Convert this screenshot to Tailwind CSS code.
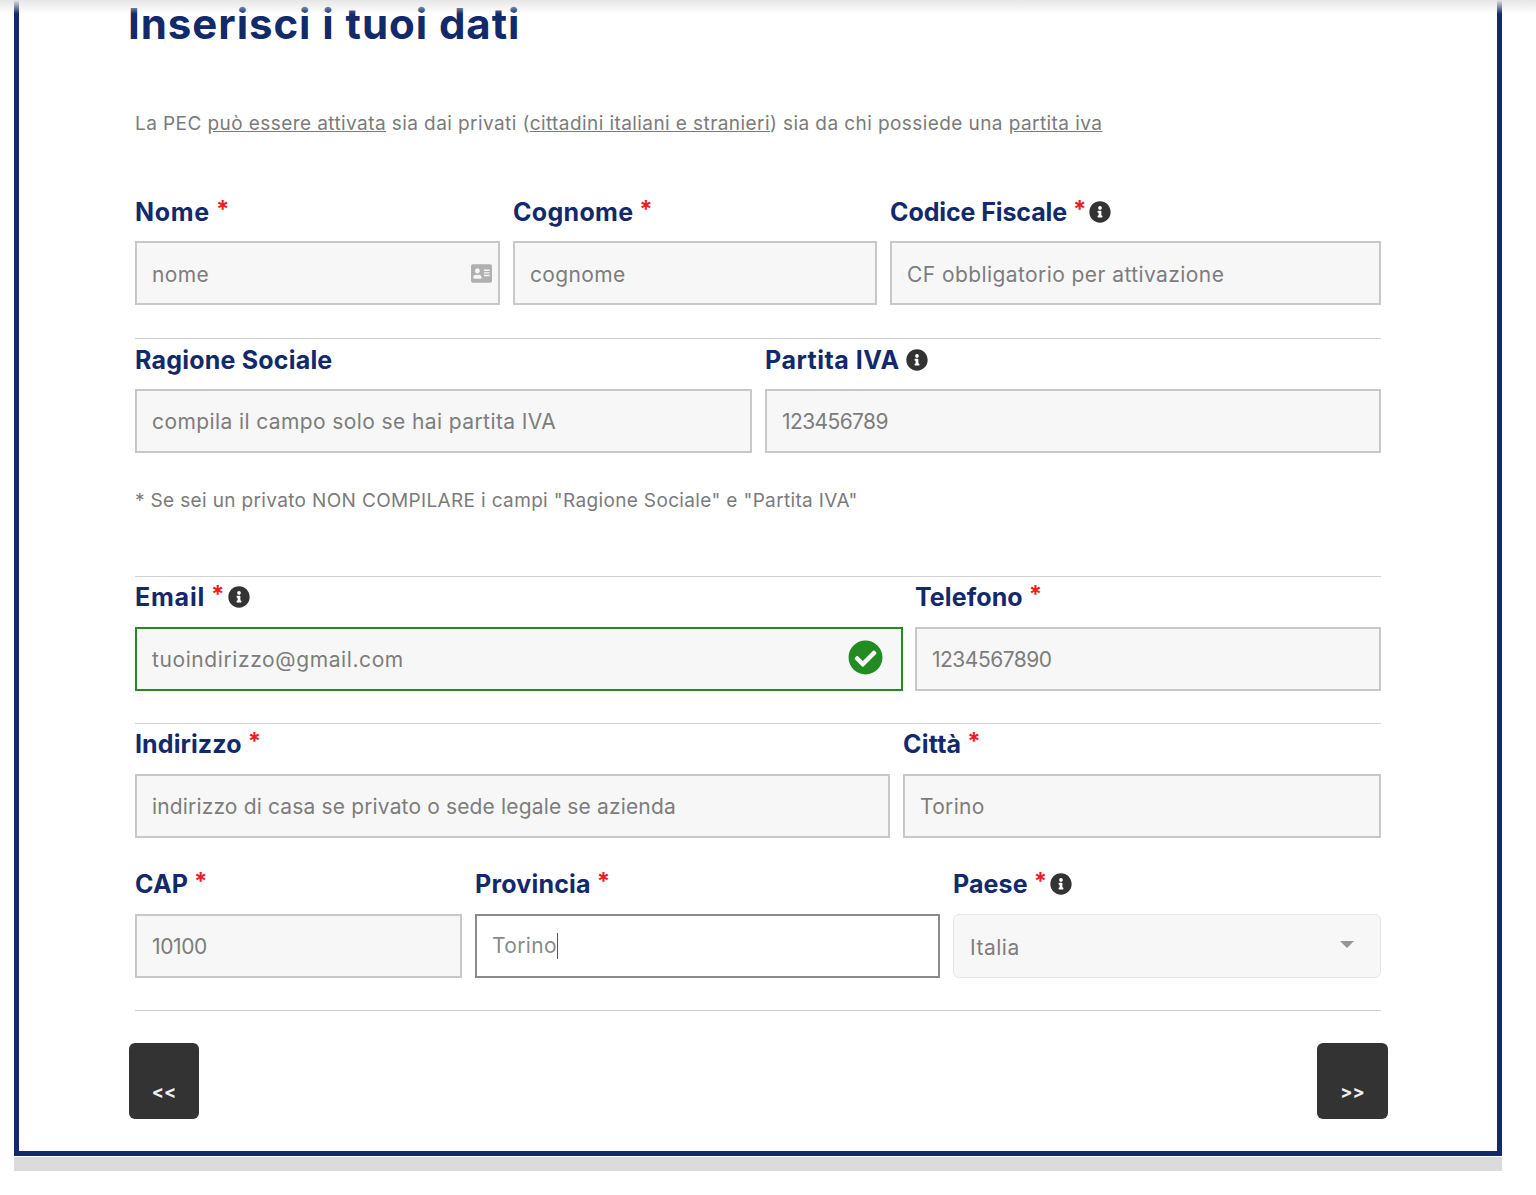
<!doctype html>
<html lang="it">
<head>
<meta charset="utf-8">
<title>Inserisci i tuoi dati</title>
<script src="https://cdn.jsdelivr.net/npm/@tailwindcss/browser@4"></script>
</head>
<body class="relative h-[1195px] overflow-hidden bg-white font-['Inter','Liberation_Sans',sans-serif]">
  <div class="absolute inset-x-0 top-0 h-[14px] bg-gradient-to-b from-[#e6e6e6] to-transparent"></div>

  <div class="ml-[14px] flex h-[1156px] w-[1488px] flex-col border-x-[5px] border-b-[5px] border-[#12296b] px-[116px]">
    <h1 class="-ml-[7px] h-[48px] text-[42px] leading-[48px] font-bold tracking-[0.95px] text-[#12296b]">Inserisci i tuoi dati</h1>

    <p class="mt-[61px] h-[29px] text-[19px] leading-[30px] tracking-[0.42px] text-[#7b7b7b]">La PEC <u>può essere attivata</u> sia dai privati (<u>cittadini italiani e stranieri</u>) sia da chi possiede una <u>partita iva</u></p>

    <!-- nome cognome cf -->
    <div class="mt-[59px] grid grid-cols-[365px_364px_1fr] gap-x-[13px]">
      <div>
        <label class="mb-[14px] flex h-[30px] items-center gap-[6px] pt-[2px] text-[25px] font-bold tracking-[0.7px] text-[#12296b]">Nome <span class="-mt-[6px] text-[24px] text-[#ee1c25]">*</span></label>
        <div class="flex h-[64px] items-center border-2 border-[#c8c8c8] bg-[#f7f7f7] pr-[6px] pl-[15px]">
          <input class="min-w-0 flex-1 bg-transparent pt-[3px] text-[21px] tracking-[0.35px] outline-none placeholder:text-[#7d7d7d]" placeholder="nome">
          <svg class="h-[21px] w-[21px] fill-[#b0b0b0]" viewBox="0 0 576 512" preserveAspectRatio="none"><path d="M528 32H48C21.5 32 0 53.5 0 80v352c0 26.5 21.5 48 48 48h480c26.5 0 48-21.5 48-48V80c0-26.5-21.5-48-48-48zm-352 96c35.3 0 64 28.7 64 64s-28.7 64-64 64-64-28.7-64-64 28.7-64 64-64zm112 236.8c0 10.6-10 19.2-22.4 19.2H86.4C74 384 64 375.4 64 364.8v-19.2c0-31.8 30.1-57.6 67.2-57.6h5c12.3 5.1 25.7 8 39.8 8s27.6-2.9 39.8-8h5c37.1 0 67.2 25.8 67.2 57.6v19.2zM512 312c0 4.4-3.6 8-8 8H360c-4.4 0-8-3.6-8-8v-16c0-4.4 3.6-8 8-8h144c4.4 0 8 3.6 8 8v16zm0-64c0 4.4-3.6 8-8 8H360c-4.4 0-8-3.6-8-8v-16c0-4.4 3.6-8 8-8h144c4.4 0 8 3.6 8 8v16zm0-64c0 4.4-3.6 8-8 8H360c-4.4 0-8-3.6-8-8v-16c0-4.4 3.6-8 8-8h144c4.4 0 8 3.6 8 8v16z"/></svg>
        </div>
      </div>
      <div>
        <label class="mb-[14px] flex h-[30px] items-center gap-[6px] pt-[2px] text-[25px] font-bold tracking-[0.3px] text-[#12296b]">Cognome <span class="-mt-[6px] text-[24px] text-[#ee1c25]">*</span></label>
        <input class="h-[64px] w-full border-2 border-[#c8c8c8] bg-[#f7f7f7] px-[15px] pt-[2px] text-[21px] tracking-[0.35px] outline-none placeholder:text-[#7d7d7d]" placeholder="cognome">
      </div>
      <div>
        <label class="mb-[14px] flex h-[30px] items-center gap-[6px] pt-[2px] text-[25px] font-bold tracking-[-0.1px] text-[#12296b]">Codice Fiscale <span class="-mt-[6px] text-[24px] text-[#ee1c25]">*</span>
          <svg class="-mt-[2px] -ml-[3px] h-[22px] w-[22px] fill-[#333]" viewBox="0 0 512 512"><path d="M256 8C119.043 8 8 119.083 8 256c0 136.997 111.043 248 248 248s248-111.003 248-248C504 119.083 392.957 8 256 8zm0 110c23.196 0 42 18.804 42 42s-18.804 42-42 42-42-18.804-42-42 18.804-42 42-42zm56 254c0 6.627-5.373 12-12 12h-88c-6.627 0-12-5.373-12-12v-24c0-6.627 5.373-12 12-12h12v-64h-12c-6.627 0-12-5.373-12-12v-24c0-6.627 5.373-12 12-12h64c6.627 0 12 5.373 12 12v100h12c6.627 0 12 5.373 12 12v24z"/></svg>
        </label>
        <input class="h-[64px] w-full border-2 border-[#c8c8c8] bg-[#f7f7f7] px-[15px] pt-[2px] text-[21px] tracking-[0.42px] outline-none placeholder:text-[#7d7d7d]" placeholder="CF obbligatorio per attivazione">
      </div>
    </div>

    <hr class="mt-[33px] border-[#d2d2d2]">

    <!-- ragione sociale -->
    <div class="mt-[6px] grid grid-cols-[617px_1fr] gap-x-[13px]">
      <div>
        <label class="mb-[14px] flex h-[30px] items-center pt-[2px] text-[25px] font-bold tracking-[0.2px] text-[#12296b]">Ragione Sociale</label>
        <input class="h-[64px] w-full border-2 border-[#c8c8c8] bg-[#f7f7f7] px-[15px] text-[21px] tracking-[0.4px] outline-none placeholder:text-[#7d7d7d]" placeholder="compila il campo solo se hai partita IVA">
      </div>
      <div>
        <label class="mb-[14px] flex h-[30px] items-center gap-[6px] pt-[2px] text-[25px] font-bold tracking-[0.5px] text-[#12296b]">Partita IVA
          <svg class="-mt-[2px] h-[22px] w-[22px] fill-[#333]" viewBox="0 0 512 512"><path d="M256 8C119.043 8 8 119.083 8 256c0 136.997 111.043 248 248 248s248-111.003 248-248C504 119.083 392.957 8 256 8zm0 110c23.196 0 42 18.804 42 42s-18.804 42-42 42-42-18.804-42-42 18.804-42 42-42zm56 254c0 6.627-5.373 12-12 12h-88c-6.627 0-12-5.373-12-12v-24c0-6.627 5.373-12 12-12h12v-64h-12c-6.627 0-12-5.373-12-12v-24c0-6.627 5.373-12 12-12h64c6.627 0 12 5.373 12 12v100h12c6.627 0 12 5.373 12 12v24z"/></svg>
        </label>
        <input class="h-[64px] w-full border-2 border-[#c8c8c8] bg-[#f7f7f7] px-[15px] text-[21px] tracking-[-0.6px] outline-none placeholder:text-[#7d7d7d]" placeholder="123456789">
      </div>
    </div>

    <p class="mt-[33px] h-[29px] text-[19px] leading-[30px] tracking-[0.35px] text-[#7b7b7b]">* Se sei un privato NON COMPILARE i campi "Ragione Sociale" e "Partita IVA"</p>

    <hr class="mt-[61px] border-[#d2d2d2]">

    <!-- email telefono -->
    <div class="mt-[5px] grid grid-cols-[768px_1fr] gap-x-[12px]">
      <div>
        <label class="mb-[15px] flex h-[30px] items-center gap-[6px] pt-[2px] text-[25px] font-bold tracking-[0.8px] text-[#12296b]">Email <span class="-mt-[6px] text-[24px] text-[#ee1c25]">*</span>
          <svg class="-mt-[2px] -ml-[3px] h-[22px] w-[22px] fill-[#333]" viewBox="0 0 512 512"><path d="M256 8C119.043 8 8 119.083 8 256c0 136.997 111.043 248 248 248s248-111.003 248-248C504 119.083 392.957 8 256 8zm0 110c23.196 0 42 18.804 42 42s-18.804 42-42 42-42-18.804-42-42 18.804-42 42-42zm56 254c0 6.627-5.373 12-12 12h-88c-6.627 0-12-5.373-12-12v-24c0-6.627 5.373-12 12-12h12v-64h-12c-6.627 0-12-5.373-12-12v-24c0-6.627 5.373-12 12-12h64c6.627 0 12 5.373 12 12v100h12c6.627 0 12 5.373 12 12v24z"/></svg>
        </label>
        <div class="flex h-[64px] items-center border-2 border-[#228b22] bg-[#f7f7f7] pr-[18px] pl-[15px]">
          <input class="min-w-0 flex-1 bg-transparent pt-[2px] text-[21px] tracking-[0.6px] outline-none placeholder:text-[#7d7d7d]" placeholder="tuoindirizzo@gmail.com">
          <svg class="-mt-[3px] h-[35px] w-[35px] fill-[#228b22]" viewBox="0 0 512 512"><path d="M504 256c0 136.967-111.033 248-248 248S8 392.967 8 256 119.033 8 256 8s248 111.033 248 248zM227.314 387.314l184-184c6.248-6.248 6.248-16.379 0-22.627l-22.627-22.627c-6.248-6.249-16.379-6.249-22.628 0L216 308.118l-70.059-70.059c-6.248-6.248-16.379-6.248-22.628 0l-22.627 22.627c-6.248 6.248-6.248 16.379 0 22.627l104 104c6.249 6.249 16.379 6.249 22.628.001z"/></svg>
        </div>
      </div>
      <div>
        <label class="mb-[15px] flex h-[30px] items-center gap-[6px] pt-[2px] text-[25px] font-bold tracking-[0.1px] text-[#12296b]">Telefono <span class="-mt-[6px] text-[24px] text-[#ee1c25]">*</span></label>
        <input class="h-[64px] w-full border-2 border-[#c8c8c8] bg-[#f7f7f7] px-[15px] text-[21px] tracking-[-0.5px] outline-none placeholder:text-[#7d7d7d]" placeholder="1234567890">
      </div>
    </div>

    <hr class="mt-[32px] border-[#d2d2d2]">

    <!-- indirizzo citta -->
    <div class="mt-[5px] grid grid-cols-[755px_1fr] gap-x-[13px]">
      <div>
        <label class="mb-[15px] flex h-[30px] items-center gap-[6px] pt-[2px] text-[25px] font-bold tracking-[0.1px] text-[#12296b]">Indirizzo <span class="-mt-[6px] text-[24px] text-[#ee1c25]">*</span></label>
        <input class="h-[64px] w-full border-2 border-[#c8c8c8] bg-[#f7f7f7] px-[15px] text-[21px] tracking-[0.15px] outline-none placeholder:text-[#7d7d7d]" placeholder="indirizzo di casa se privato o sede legale se azienda">
      </div>
      <div>
        <label class="mb-[15px] flex h-[30px] items-center gap-[6px] pt-[2px] text-[25px] font-bold tracking-[0.2px] text-[#12296b]">Città <span class="-mt-[6px] text-[24px] text-[#ee1c25]">*</span></label>
        <input class="h-[64px] w-full border-2 border-[#c8c8c8] bg-[#f7f7f7] px-[15px] text-[21px] tracking-[0.3px] outline-none placeholder:text-[#7d7d7d]" placeholder="Torino">
      </div>
    </div>

    <!-- cap provincia paese -->
    <div class="mt-[31px] grid grid-cols-[327px_465px_1fr] gap-x-[13px]">
      <div>
        <label class="mb-[15px] flex h-[30px] items-center gap-[6px] pt-[2px] text-[25px] font-bold tracking-[0.1px] text-[#12296b]">CAP <span class="-mt-[6px] text-[24px] text-[#ee1c25]">*</span></label>
        <input class="h-[64px] w-full border-2 border-[#c8c8c8] bg-[#f7f7f7] px-[15px] text-[21px] tracking-[-0.4px] outline-none placeholder:text-[#7d7d7d]" placeholder="10100">
      </div>
      <div>
        <label class="mb-[15px] flex h-[30px] items-center gap-[6px] pt-[2px] text-[25px] font-bold tracking-[0.2px] text-[#12296b]">Provincia <span class="-mt-[6px] text-[24px] text-[#ee1c25]">*</span></label>
        <div class="flex h-[64px] items-center border-2 border-[#8a8a8a] bg-white px-[15px] text-[21px] tracking-[0.35px] text-[#8a8a8a]">Torino<span class="h-[26px] w-px bg-[#555]"></span></div>
      </div>
      <div>
        <label class="mb-[15px] flex h-[30px] items-center gap-[6px] pt-[2px] text-[25px] font-bold tracking-[0.1px] text-[#12296b]">Paese <span class="-mt-[6px] text-[24px] text-[#ee1c25]">*</span>
          <svg class="-mt-[2px] -ml-[3px] h-[22px] w-[22px] fill-[#333]" viewBox="0 0 512 512"><path d="M256 8C119.043 8 8 119.083 8 256c0 136.997 111.043 248 248 248s248-111.003 248-248C504 119.083 392.957 8 256 8zm0 110c23.196 0 42 18.804 42 42s-18.804 42-42 42-42-18.804-42-42 18.804-42 42-42zm56 254c0 6.627-5.373 12-12 12h-88c-6.627 0-12-5.373-12-12v-24c0-6.627 5.373-12 12-12h12v-64h-12c-6.627 0-12-5.373-12-12v-24c0-6.627 5.373-12 12-12h64c6.627 0 12 5.373 12 12v100h12c6.627 0 12 5.373 12 12v24z"/></svg>
        </label>
        <div class="flex h-[64px] items-center justify-between rounded-md border border-[#e6e6e6] bg-[#f7f7f7] pt-[3px] pr-[26px] pl-[16px] text-[21px] tracking-[0.5px] text-[#7d7d7d]">
          Italia
          <span class="-mt-[6px] h-0 w-0 border-x-[7px] border-t-[7px] border-x-transparent border-t-[#969696]"></span>
        </div>
      </div>
    </div>

    <hr class="mt-[32px] border-[#d2d2d2]">

    <div class="-mx-[6px] mt-[32px] flex justify-between">
      <button class="flex h-[76px] w-[70px] items-end justify-center rounded-md bg-[#333] pb-[14px] text-[18px] font-bold text-[#eee]">&lt;&lt;</button>
      <button class="-mr-px flex h-[76px] w-[71px] items-end justify-center rounded-md bg-[#333] pb-[14px] text-[18px] font-bold text-[#eee]">&gt;&gt;</button>
    </div>
  </div>

  <div class="mt-px ml-[14px] h-[14px] w-[1488px] bg-[#dbdbdb]"></div>
</body>
</html>
